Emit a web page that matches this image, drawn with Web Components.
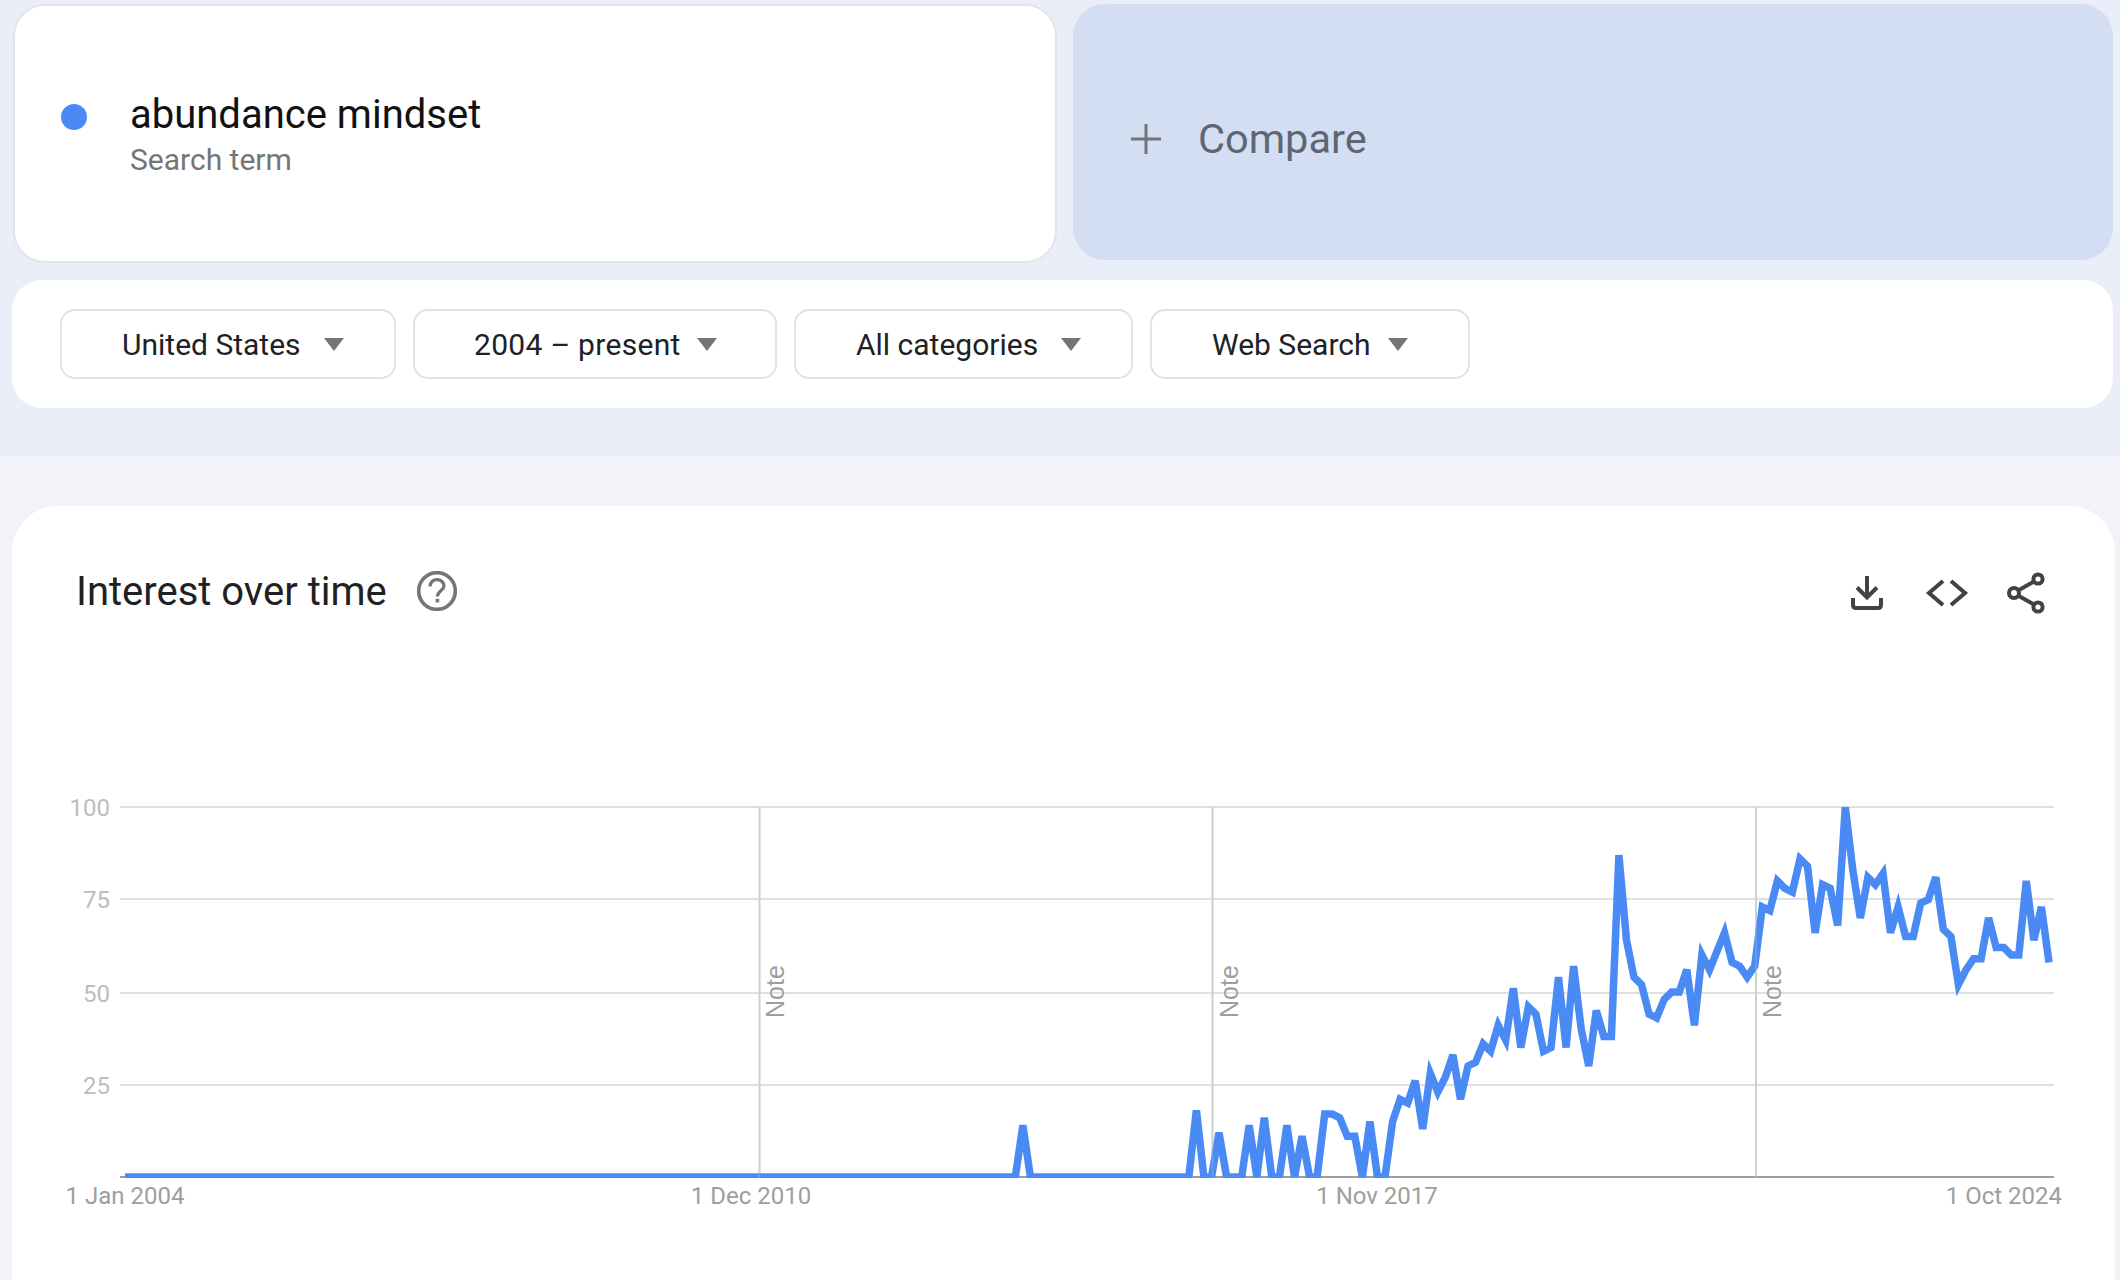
<!DOCTYPE html>
<html>
<head>
<meta charset="utf-8">
<title>Google Trends</title>
<style>
	html, body {
		background: #f1f3f9;
		font-family: Roboto, "Liberation Sans", sans-serif;
		height: 1280px;
		margin: 0;
		overflow: hidden;
	}
</style>
</head>
<body>
<gt-app>
	<gt-term-card slot="term" label="Search term">abundance mindset</gt-term-card>
	<gt-compare-card slot="compare">Compare</gt-compare-card>
	<gt-filter-chip slot="filters" style="--chip-width: 336px; --chip-pad: 60px; --chip-gap: 23px">United States</gt-filter-chip>
	<gt-filter-chip slot="filters" style="--chip-width: 364px; --chip-pad: 59px; --chip-gap: 16px; letter-spacing: .3px">2004 – present</gt-filter-chip>
	<gt-filter-chip slot="filters" style="--chip-width: 339px; --chip-pad: 60px; --chip-gap: 23px">All categories</gt-filter-chip>
	<gt-filter-chip slot="filters" style="--chip-width: 320px; --chip-pad: 60px; --chip-gap: 17px">Web Search</gt-filter-chip>
	<gt-trend-card slot="main">Interest over time</gt-trend-card>
</gt-app>
<script>
	class GtApp extends HTMLElement {
		constructor() {
			super();
			this.attachShadow({ mode: 'open' });
			this.shadowRoot.innerHTML = `
				<style>
					:host {
						display: block;
					}
					.band {
						background: #eaeef8;
						box-sizing: border-box;
						height: 456px;
						padding: 4px 7px 0 12px;
					}
					.top {
						display: grid;
						gap: 16px;
						grid-template-columns: 1044px 1fr;
						height: 260px;
						padding-left: 1px;
					}
					.filters {
						background: #fff;
						border-radius: 30px;
						box-sizing: border-box;
						display: flex;
						gap: 17px;
						height: 128px;
						margin-top: 16px;
						padding: 29px 0 0 48px;
					}
					.main {
						padding: 50px 5px 0 12px;
					}
				</style>
				<div class="band">
					<div class="top">
						<slot name="term"></slot>
						<slot name="compare"></slot>
					</div>
					<div class="filters"><slot name="filters"></slot></div>
				</div>
				<div class="main"><slot name="main"></slot></div>
			`;
		}
	}

	class GtTermCard extends HTMLElement {
		constructor() {
			super();
			this.attachShadow({ mode: 'open' });
			this.shadowRoot.innerHTML = `
				<style>
					:host {
						background: #fff;
						border: 2px solid #e3e4e8;
						border-radius: 32px;
						box-sizing: border-box;
						display: flex;
						gap: 43px;
						height: 259px;
						padding: 87px 0 0 46px;
					}
					.dot {
						background: #4a8af4;
						border-radius: 50%;
						flex: none;
						height: 26px;
						margin-top: 11px;
						width: 26px;
					}
					.name {
						color: #111;
						font-size: 40px;
						line-height: 44px;
					}
					.label {
						color: #757575;
						font-size: 30px;
						line-height: 34px;
						margin-top: 6px;
					}
				</style>
				<div class="dot"></div>
				<div>
					<div class="name"><slot></slot></div>
					<div class="label"></div>
				</div>
			`;
		}

		connectedCallback() {
			this.shadowRoot.querySelector('.label').textContent = this.getAttribute('label');
		}
	}

	class GtCompareCard extends HTMLElement {
		constructor() {
			super();
			this.attachShadow({ mode: 'open' });
			this.shadowRoot.innerHTML = `
				<style>
					:host {
						align-items: center;
						background: #d3def2;
						border-radius: 32px;
						box-sizing: border-box;
						color: #5f6673;
						display: flex;
						font-size: 41.5px;
						gap: 37px;
						height: 256px;
						padding: 13px 0 0 58px;
					}
					svg {
						display: block;
						flex: none;
					}
				</style>
				<svg width="30" height="30" viewBox="0 0 30 30"><path d="M15 0V30M0 15H30" fill="none" stroke="#70757a" stroke-width="3"/></svg>
				<span><slot></slot></span>
			`;
		}
	}

	class GtFilterChip extends HTMLElement {
		constructor() {
			super();
			this.attachShadow({ mode: 'open' });
			this.shadowRoot.innerHTML = `
				<style>
					:host {
						align-items: center;
						background: #fff;
						border: 2px solid #e2e2e2;
						border-radius: 15px;
						box-sizing: border-box;
						color: #202124;
						display: flex;
						font-size: 30px;
						gap: var(--chip-gap);
						height: 70px;
						padding-left: var(--chip-pad);
						width: var(--chip-width);
					}
					.arrow {
						border-left: 10px solid transparent;
						border-right: 10px solid transparent;
						border-top: 13px solid #757575;
						flex: none;
						height: 0;
						width: 0;
					}
				</style>
				<span><slot></slot></span>
				<div class="arrow"></div>
			`;
		}
	}

	class GtIconButton extends HTMLElement {
		static icons = {
			download: '<path d="M24 7V28.5M14 18.5L24 28.5L34 18.5" fill="none"/><path d="M10 29V36Q10 39 13 39H35Q38 39 38 36V29" fill="none"/>',
			code: '<path d="M20 12L6 24L20 36M28 12L42 24L28 36" fill="none"/>',
			share: '<circle cx="11" cy="24" r="5" fill="none"/><circle cx="35" cy="10" r="4.6" fill="none"/><circle cx="35" cy="38" r="4.6" fill="none"/><path d="M15.5 21.2L31 12.5M15.5 26.8L31 35.5" fill="none"/>',
		};

		constructor() {
			super();
			this.attachShadow({ mode: 'open' });
			this.shadowRoot.innerHTML = `
				<style>
					:host {
						display: block;
						height: 48px;
						width: 48px;
					}
					svg {
						display: block;
						stroke: #424242;
						stroke-width: 4;
					}
				</style>
				<svg width="48" height="48" viewBox="0 0 48 48"></svg>
			`;
		}

		connectedCallback() {
			this.shadowRoot.querySelector('svg').innerHTML = GtIconButton.icons[this.getAttribute('icon')];
		}
	}

	class GtTrendChart extends HTMLElement {
		// monthly values, everything before and between these is 0
		static values = {
			119: 14, 142: 18, 145: 12, 149: 14, 151: 16, 154: 14, 156: 11, 159: 17, 160: 17, 161: 16,
			162: 11, 163: 11, 165: 15, 168: 15, 169: 21, 170: 20, 171: 26, 172: 13, 173: 28, 174: 23,
			175: 27, 176: 33, 177: 21, 178: 30, 179: 31, 180: 36, 181: 34, 182: 41, 183: 37, 184: 51,
			185: 35, 186: 46, 187: 44, 188: 34, 189: 35, 190: 54, 191: 35, 192: 57, 193: 40, 194: 30,
			195: 45, 196: 38, 197: 38, 198: 87, 199: 64, 200: 54, 201: 52, 202: 44, 203: 43, 204: 48,
			205: 50, 206: 50, 207: 56, 208: 41, 209: 60, 210: 56, 211: 61, 212: 66, 213: 58, 214: 57,
			215: 54, 216: 57, 217: 73, 218: 72, 219: 80, 220: 78, 221: 77, 222: 86, 223: 84, 224: 66,
			225: 79, 226: 78, 227: 68, 228: 100, 229: 83, 230: 70, 231: 81, 232: 79, 233: 82, 234: 66,
			235: 73, 236: 65, 237: 65, 238: 74, 239: 75, 240: 81, 241: 67, 242: 65, 243: 52, 244: 56,
			245: 59, 246: 59, 247: 70, 248: 62, 249: 62, 250: 60, 251: 60, 252: 80, 253: 64, 254: 73,
			255: 58,
		};

		constructor() {
			super();
			this.attachShadow({ mode: 'open' });

			let points = '';
			for (let i = 0; i <= 255; i++) {
				const x = 125 + i * 7.545;
				const y = 1177 - (GtTrendChart.values[i] || 0) * 3.7;
				points += `${x.toFixed(1)},${y.toFixed(1)} `;
			}

			const grid = [[100, 807], [75, 899], [50, 993], [25, 1085]].map(([label, y]) => `
				<rect x="120" y="${y - 1}" width="1934" height="2" fill="#e0e0e0"/>
				<text class="y" x="110" y="${y + 8.5}">${label}</text>
			`).join('');

			const notes = [759.5, 1212.5, 1756].map(x => `
				<rect x="${x - 1}" y="807" width="2" height="371" fill="#d0d0d0"/>
			`).join('');

			const noteLabels = [784, 1237.5, 1781].map(x => `
				<text class="note" transform="translate(${x} 1018) rotate(-90)">Note</text>
			`).join('');

			const overlays = [759.5, 1212.5, 1756].map(x => `
				<rect x="${x - 1}" y="807" width="2" height="371" fill="#d0d0d0" opacity=".25"/>
			`).join('');

			this.shadowRoot.innerHTML = `
				<style>
					:host {
						display: block;
					}
					svg {
						display: block;
					}
					text {
						fill: #9e9e9e;
						font-family: Roboto, "Liberation Sans", sans-serif;
						font-size: 24px;
					}
					.y {
						fill: #bdbdbd;
						text-anchor: end;
					}
					.x {
						text-anchor: middle;
					}
					.note {
						font-family: "Liberation Sans", sans-serif;
						font-size: 25px;
					}
				</style>
				<svg width="2103" height="620" viewBox="12 660 2103 620">
					<defs>
						<clipPath id="plot"><rect x="120" y="807" width="1934" height="371"/></clipPath>
					</defs>
					${grid}
					${notes}
					<rect x="120" y="1176" width="1934" height="2" fill="#9e9e9e"/>
					${noteLabels}
					<polyline clip-path="url(#plot)" points="${points}" fill="none" stroke="#4a8af4" stroke-width="7.5"/>
					${overlays}
					<text class="x" x="125" y="1204">1 Jan 2004</text>
					<text class="x" x="751" y="1204">1 Dec 2010</text>
					<text class="x" x="1377" y="1204">1 Nov 2017</text>
					<text x="2062" y="1204" text-anchor="end">1 Oct 2024</text>
				</svg>
			`;
		}
	}

	class GtTrendCard extends HTMLElement {
		constructor() {
			super();
			this.attachShadow({ mode: 'open' });
			this.shadowRoot.innerHTML = `
				<style>
					:host {
						background: #fff;
						border-radius: 46px 46px 0 0;
						display: block;
						height: 774px;
						overflow: hidden;
					}
					.head {
						align-items: center;
						box-sizing: border-box;
						display: flex;
						height: 154px;
						padding: 16px 64.5px 0 64px;
					}
					h2 {
						color: #212121;
						font-size: 40px;
						font-weight: 400;
						margin: 0;
					}
					.help {
						display: block;
						margin-left: 30px;
					}
					.actions {
						display: flex;
						gap: 32px;
						margin-left: auto;
						padding-top: 4px;
					}
				</style>
				<div class="head">
					<h2><slot></slot></h2>
					<svg class="help" width="40" height="40" viewBox="0 0 40 40">
						<circle cx="20" cy="20" r="18.3" fill="none" stroke="#757575" stroke-width="3.6"/>
						<path d="M13 15.4C13 11.4 16.2 8.6 20 8.6C23.8 8.6 27 11.4 27 15C27 19.6 20.4 20 20.4 25.4" fill="none" stroke="#757575" stroke-width="3.2"/>
						<rect x="18.6" y="27.8" width="3.6" height="3.6" fill="#757575"/>
					</svg>
					<div class="actions">
						<gt-icon-button icon="download"></gt-icon-button>
						<gt-icon-button icon="code"></gt-icon-button>
						<gt-icon-button icon="share"></gt-icon-button>
					</div>
				</div>
				<gt-trend-chart></gt-trend-chart>
			`;
		}
	}

	customElements.define('gt-app', GtApp);
	customElements.define('gt-term-card', GtTermCard);
	customElements.define('gt-compare-card', GtCompareCard);
	customElements.define('gt-filter-chip', GtFilterChip);
	customElements.define('gt-icon-button', GtIconButton);
	customElements.define('gt-trend-chart', GtTrendChart);
	customElements.define('gt-trend-card', GtTrendCard);
</script>
</body>
</html>
